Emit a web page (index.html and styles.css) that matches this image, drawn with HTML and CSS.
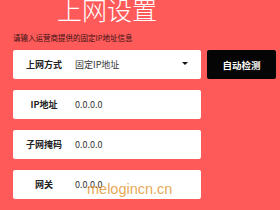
FILE: index.html
```html
<!DOCTYPE html>
<html lang="zh-CN">
<head>
<meta charset="utf-8">
<title>上网设置</title>
<link rel="stylesheet" href="styles.css">
</head>
<body>
<div class="page">
  <h1 class="title">上网设置</h1>
  <p class="hint">请输入运营商提供的固定IP地址信息</p>
  <div class="form">
    <div class="field">
      <span class="label">上网方式</span>
      <span class="value">固定IP地址</span>
      <span class="arrow"></span>
    </div>
    <button class="detect">自动检测</button>
    <div class="field">
      <span class="label">IP地址</span>
      <span class="value">0.0.0.0</span>
    </div>
    <div></div>
    <div class="field">
      <span class="label">子网掩码</span>
      <span class="value">0.0.0.0</span>
    </div>
    <div></div>
    <div class="field">
      <span class="label">网关</span>
      <span class="value">0.0.0.0</span>
    </div>
    <div></div>
  </div>
  <div class="watermark">melogincn.cn</div>
</div>
</body>
</html>
```

FILE: styles.css
```css
html, body {
  margin: 0;
  padding: 0;
}
body {
  width: 280px;
  height: 210px;
  overflow: hidden;
  background: #ff5a5a;
  font-family: "Noto Sans CJK SC", "Noto Sans", sans-serif;
}
.page {
  position: relative;
  height: 210px;
  padding-left: 13px;
}
.title {
  width: 188px;
  margin: -3px 0 0 0;
  text-align: center;
  font-size: 25px;
  line-height: 25px;
  font-weight: 300;
  color: #ffffff;
  letter-spacing: 0;
}
.hint {
  margin: 11px 0 0 0;
  font-size: 7.5px;
  line-height: 10px;
  color: #3a1212;
}
.form {
  margin-top: 7px;
  display: grid;
  grid-template-columns: 188px 69px;
  grid-auto-rows: 29px;
  column-gap: 6px;
  row-gap: 11px;
}
.field {
  display: flex;
  align-items: center;
  background: #ffffff;
  border-radius: 2px;
  position: relative;
}
.label {
  width: 62px;
  text-align: center;
  font-size: 9px;
  font-weight: 700;
  color: #222222;
}
.value {
  font-size: 9px;
  color: #333333;
}
.arrow {
  position: absolute;
  left: 169px;
  top: 12px;
  width: 0;
  height: 0;
  border-left: 3px solid transparent;
  border-right: 3px solid transparent;
  border-top: 3px solid #111111;
}
.detect {
  margin: 0;
  padding: 0;
  border: none;
  border-radius: 2px;
  background: #050505;
  color: #ffffff;
  font-family: "Noto Sans CJK SC", sans-serif;
  font-size: 9.5px;
  font-weight: 700;
}
.watermark {
  position: absolute;
  left: 87px;
  top: 182px;
  font-family: "Liberation Sans", Arial, sans-serif;
  font-size: 14.5px;
  line-height: 20px;
  color: rgba(228, 150, 50, 0.85);
}
```
